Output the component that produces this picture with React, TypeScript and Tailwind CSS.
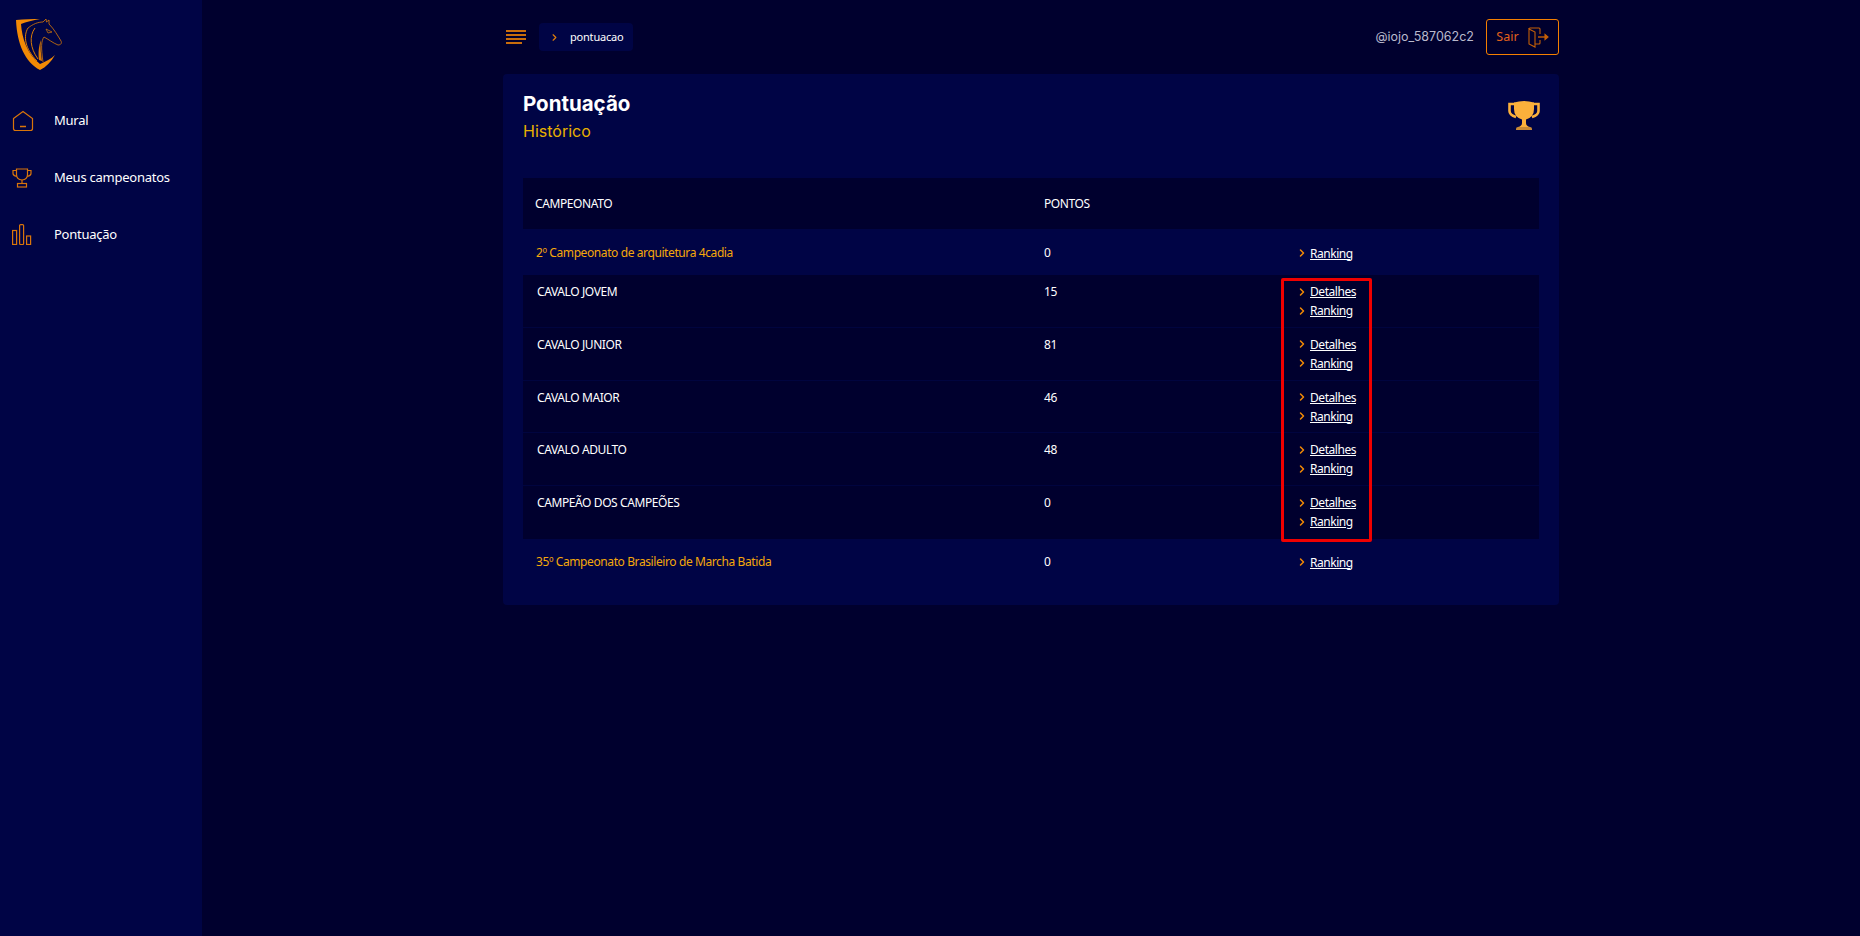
import React from 'react';
import { ChevronRight } from 'lucide-react';

const bodyFont = "font-['Noto_Sans',sans-serif]";
const headFont = "font-['Inter',sans-serif]";

const Logo = () => (
  <svg width="48" height="54" viewBox="0 0 48 54" fill="none">
    <path d="M1 2 C9 1 18 1 25 1 C18 2 11 4 6 6 C7 20 12 36 25 46 C31 43 36 41 40 37 C36 44 31 49 25 52 C10 44 2 26 1 2 Z" fill="#f28a05" />
    <path d="M13 10 C18 6 23 4 28 4 L31 1 L31.5 4 L34 2 L34 6 C39 11 43 18 46 23 C47 25 46 27 43 27 C38 25 33 21 29 19 C26 23 26 30 28 44" stroke="#d97a06" strokeWidth="0.8" />
    <path d="M13 10 C8 18 10 31 22 43 M20 10 C14 18 15 30 23 41" stroke="#d97a06" strokeWidth="1" />
    <path d="M24 42 C23 34 24 27 26 22 C25 30 26 36 27 43 Z" fill="#d97a06" />
    <path d="M31 11 L37 14 L33 15 Z" stroke="#d97a06" strokeWidth="0.7" />
  </svg>
);

const HomeIcon = () => (
  <svg width="22" height="22" viewBox="0 0 22 22" fill="none" stroke="#d9750a" strokeWidth="1.2">
    <path d="M1.5 8.5 L11 1.5 L20.5 8.5 V18.5 Q20.5 20.5 18.5 20.5 H3.5 Q1.5 20.5 1.5 18.5 Z" />
    <path d="M8 16.5 H14" strokeWidth="1.5" />
  </svg>
);

const CupIcon = () => (
  <svg width="20" height="20" viewBox="0 0 20 20" fill="none" stroke="#d9750a" strokeWidth="1.2">
    <path d="M4.5 1 H15.5 V6.5 Q15.5 11.5 10 12 Q4.5 11.5 4.5 6.5 Z" />
    <path d="M4.5 2.5 H1 V5.5 Q1 7.5 4.8 8.5 M15.5 2.5 H19 V5.5 Q19 7.5 15.2 8.5" />
    <path d="M10 12 V15.5" />
    <rect x="5.5" y="15.5" width="9" height="3.5" />
  </svg>
);

const BarsIcon = () => (
  <svg width="20" height="21" viewBox="0 0 20 21" fill="none" stroke="#d9750a" strokeWidth="1.2">
    <rect x="0.6" y="6.5" width="4" height="14" />
    <rect x="7.6" y="0.6" width="4" height="19.9" rx="1" />
    <rect x="14.6" y="12" width="4" height="8.5" />
  </svg>
);

const BigTrophy = () => (
  <svg width="32" height="31" viewBox="0 0 32 31" fill="none">
    <path d="M7 4 H1.5 V11 Q1.5 15 8 17" stroke="#fbb03b" strokeWidth="2.6" />
    <path d="M25 4 H30.5 V11 Q30.5 15 24 17" stroke="#fbb03b" strokeWidth="2.6" />
    <path d="M6 2.5 Q16 -0.5 26 2.5 V9 Q26 17 18 19.5 V23 Q18 26 22 27 H10 Q14 26 14 23 V19.5 Q6 17 6 9 Z" fill="#fbb03b" />
    <path d="M8 29 Q8 27 10 27 H22 Q24 27 24 29 V30 H8 Z" fill="#c98a35" />
  </svg>
);

const ExitIcon = () => (
  <svg width="21" height="21" viewBox="0 0 21 21" fill="none" stroke="#c45f06" strokeWidth="1.1">
    <path d="M1 2 L7 5 V20 L1 17 Z" />
    <path d="M1 2 Q1 1 2 1 H11 Q12 1 12 2 V7 M12 13 V16 Q12 17 11 17 H7" />
    <path d="M10 10 H18" strokeWidth="1.4" />
    <path d="M17 7.5 L20 10 L17 12.5 Z" fill="#c45f06" />
  </svg>
);

const Menu = ({ icon, label }: { icon: React.ReactNode; label: string }) => (
  <div className="flex items-center h-[57px]">
    <div className="w-[42px] pl-[12px] flex items-center shrink-0">{icon}</div>
    <span className="text-white text-[13px] tracking-[-0.25px] ml-[12px]">{label}</span>
  </div>
);

const LinkItem = ({ label }: { label: string }) => (
  <div className="flex items-center h-[19px]">
    <ChevronRight className="w-[12px] h-[12px] text-[#f28a05] mr-[2px]" strokeWidth={3} />
    <a className="text-white underline text-[12px] tracking-[-0.45px] leading-[17px]">{label}</a>
  </div>
);

const champs = [
  { name: 'CAVALO JOVEM', pts: 15 },
  { name: 'CAVALO JUNIOR', pts: 81 },
  { name: 'CAVALO MAIOR', pts: 46 },
  { name: 'CAVALO ADULTO', pts: 48 },
  { name: 'CAMPEÃO DOS CAMPEÕES', pts: 0 },
];

export default function App() {
  return (
    <div className={`flex h-[936px] w-[1860px] bg-[#00002e] overflow-hidden ${bodyFont}`}>
      <aside className="w-[202px] shrink-0 bg-[#000445] flex flex-col">
        <div className="pl-[15px] pt-[18px] h-[92px]"><Logo /></div>
        <div className="flex flex-col">
          <Menu icon={<HomeIcon />} label="Mural" />
          <Menu icon={<CupIcon />} label="Meus campeonatos" />
          <Menu icon={<BarsIcon />} label="Pontuação" />
        </div>
      </aside>

      <main className="w-[1056px] ml-[301px] flex flex-col">
        <header className="flex items-center h-[74px] pl-[3px]">
          <div className="flex flex-col gap-[2px] w-[20px] mr-[13px]">
            <span className="h-[2px] w-[20px] bg-[#c96d0c]" />
            <span className="h-[2px] w-[20px] bg-[#c96d0c]" />
            <span className="h-[2px] w-[20px] bg-[#c96d0c]" />
            <span className="h-[2px] w-[16px] bg-[#c96d0c]" />
          </div>
          <div className="flex items-center h-[28px] w-[94px] rounded-[4px] bg-[#000445] pl-[10px]">
            <ChevronRight className="w-[11px] h-[11px] text-[#e07f0a]" strokeWidth={2.5} />
            <span className="text-white text-[11px] tracking-[-0.2px] ml-[10px]">pontuacao</span>
          </div>
          <span className={`ml-auto text-[#b9b9cc] text-[12.5px] mr-[12px] ${headFont}`}>@iojo_587062c2</span>
          <button className="flex items-center justify-center gap-[9px] w-[73px] h-[36px] rounded-[3px] border border-[#f57f00]">
            <span className="text-[#e0601a] text-[12.5px]">Sair</span>
            <ExitIcon />
          </button>
        </header>

        <section className="relative h-[531px] rounded-[4px] bg-[#000445] px-[20px] pt-[15px]">
          <div className="flex justify-between h-[89px]">
            <div>
              <h1 className={`text-white text-[20.5px] leading-[30px] font-bold ${headFont}`}>Pontuação</h1>
              <p className={`text-[#e8b100] text-[16px] leading-[22px] mt-[1px] ${headFont}`}>Histórico</p>
            </div>
            <div className="pt-[11px] mr-[-1px]"><BigTrophy /></div>
          </div>

          <div className="flex flex-col text-white text-[12px] tracking-[-0.4px]">
            <div className="flex items-center h-[51px] bg-[#00002e] pl-[12px] pt-[1px]">
              <div className="w-[509px]">CAMPEONATO</div>
              <div>PONTOS</div>
            </div>
            <div className="flex items-center h-[46px] pl-[13px] pt-[2px]">
              <div className="w-[508px] text-[#f5a80a]">2º Campeonato de arquitetura 4cadia</div>
              <div className="w-[252px]">0</div>
              <LinkItem label="Ranking" />
            </div>
            <div className="flex flex-col bg-[#00002e]">
              {champs.map((c, i) => (
                <div key={c.name} className={`flex h-[52.75px] pl-[14px] pt-[7px] ${i < champs.length - 1 ? 'border-b border-[#00043f]' : ''}`}>
                  <div className="w-[507px] leading-[19px]">{c.name}</div>
                  <div className="w-[252px] leading-[19px]">{c.pts}</div>
                  <div className="flex flex-col">
                    <LinkItem label="Detalhes" />
                    <LinkItem label="Ranking" />
                  </div>
                </div>
              ))}
            </div>
            <div className="flex items-center h-[47px] pl-[13px]">
              <div className="w-[508px] text-[#f5a80a]">35º Campeonato Brasileiro de Marcha Batida</div>
              <div className="w-[252px]">0</div>
              <LinkItem label="Ranking" />
            </div>
          </div>

          {/* marcação vermelha por cima da tabela */}
          <div className="absolute left-[778px] top-[204px] w-[91px] h-[264px] border-[3px] border-[#f00000] rounded-[2px] pointer-events-none" />
        </section>
      </main>
    </div>
  );
}
